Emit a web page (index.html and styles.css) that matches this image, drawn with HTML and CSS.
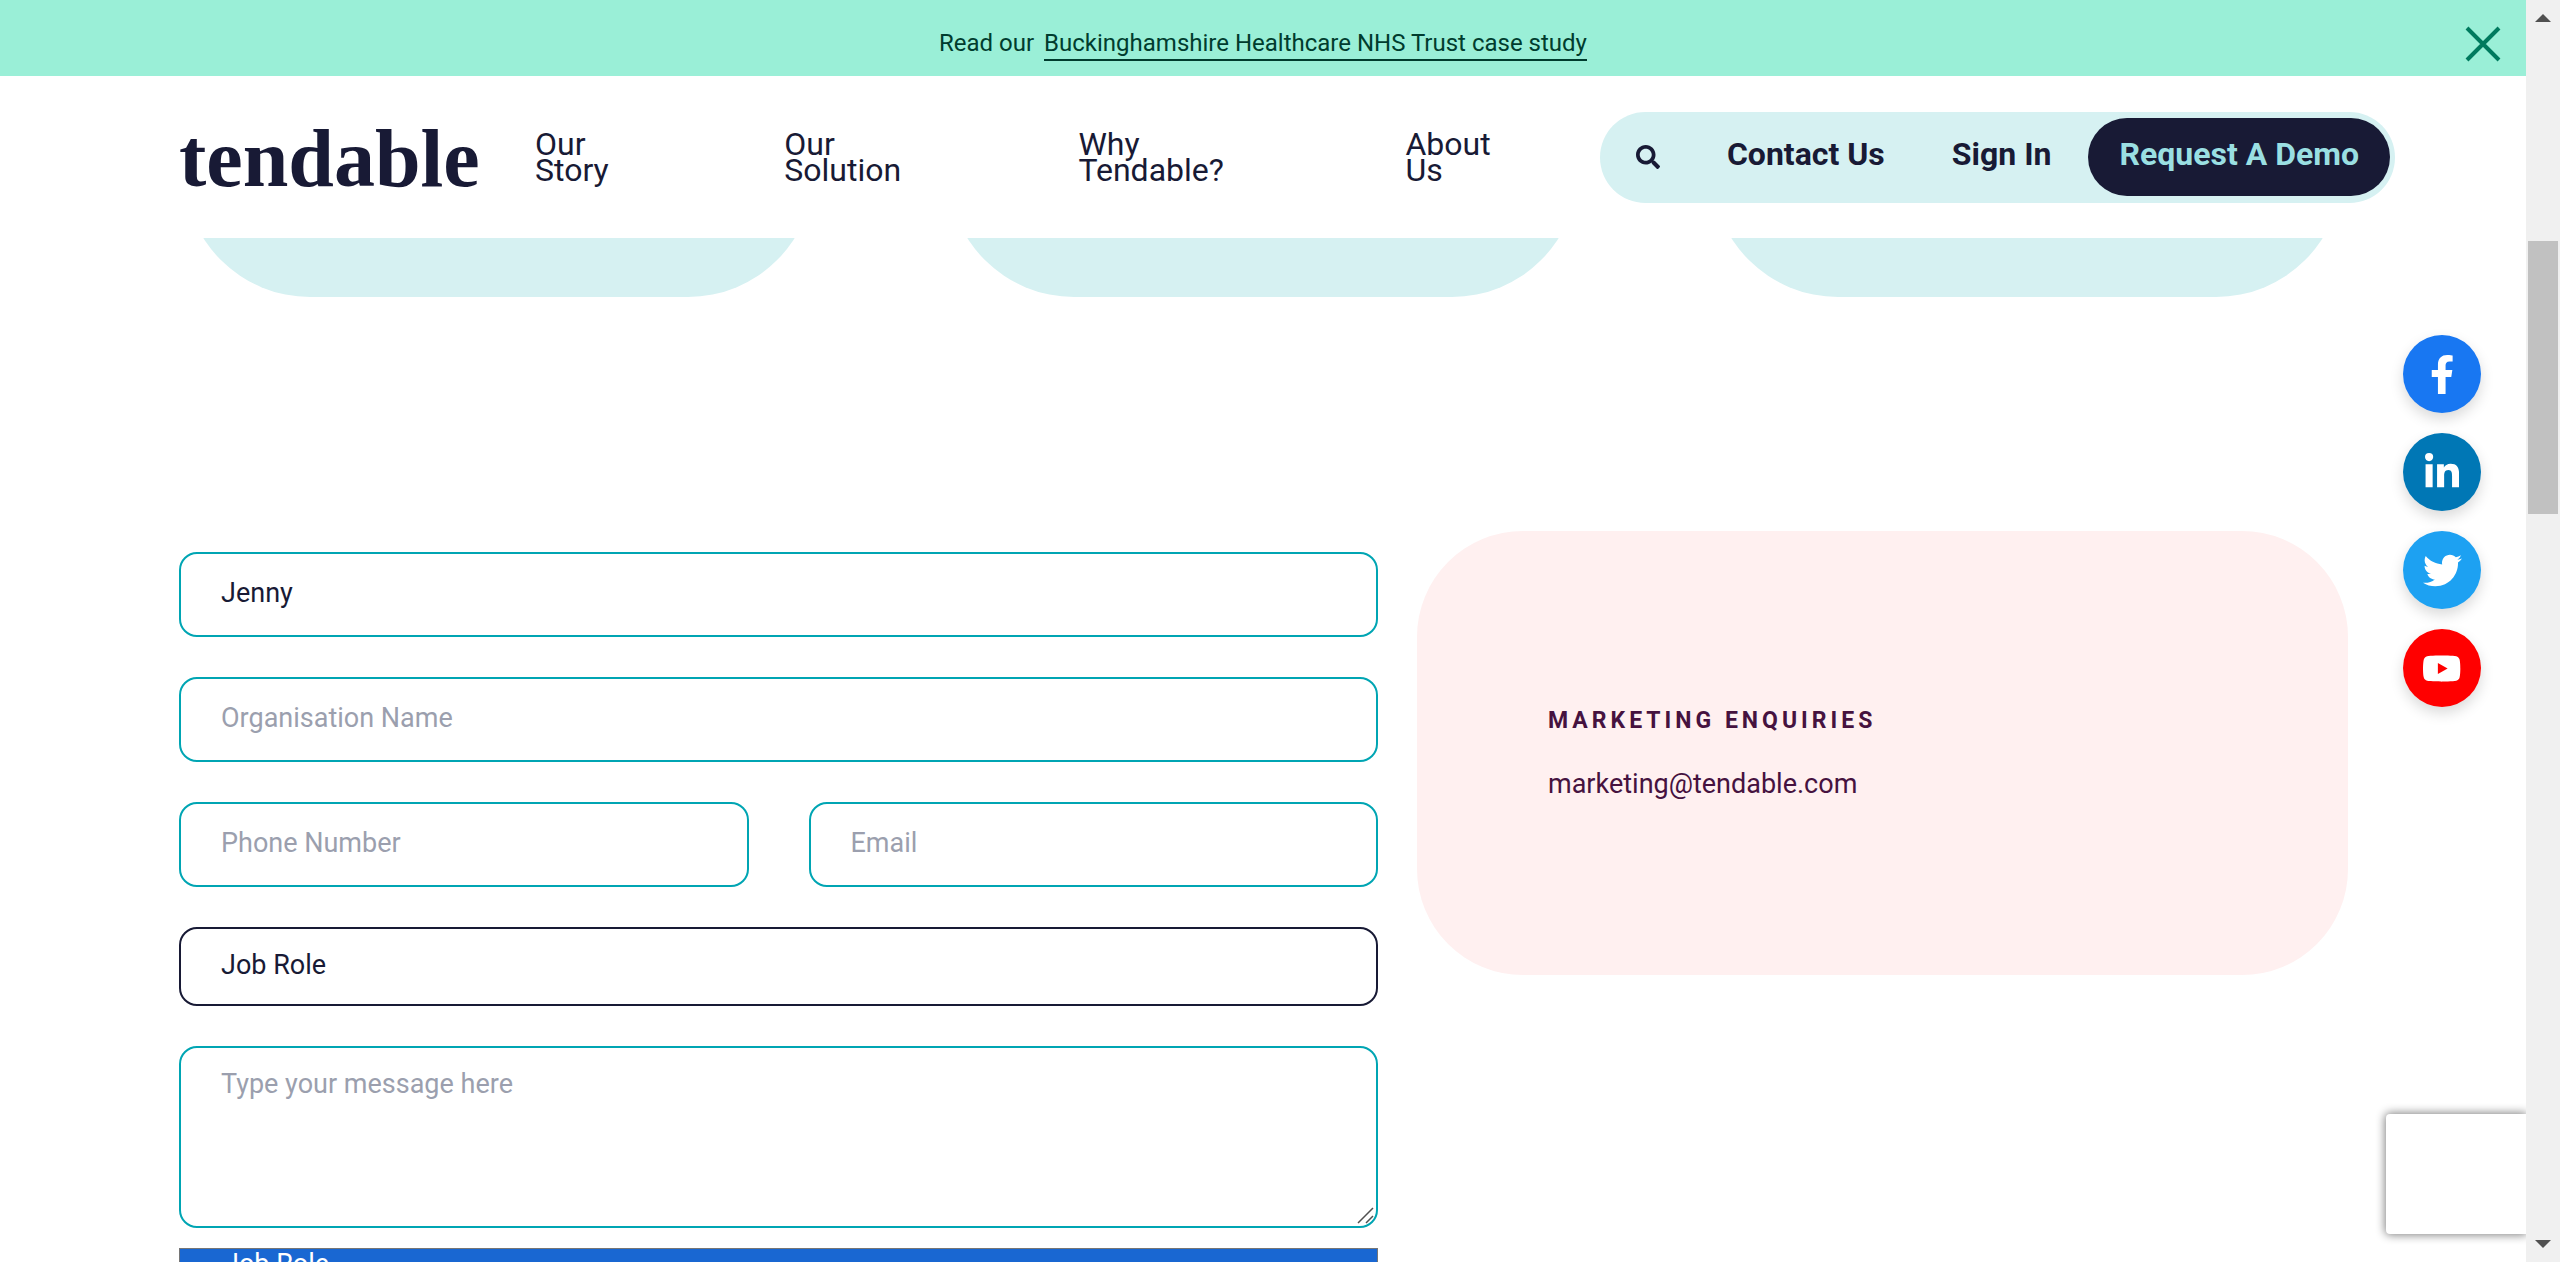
FILE: index.html
```html
<!DOCTYPE html>
<html lang="en">
<head>
<meta charset="utf-8">
<meta name="viewport" content="width=device-width, initial-scale=1">
<title>Contact | Tendable</title>
<link rel="stylesheet" href="styles.css">
</head>
<body>
<div class="page">
  <div class="banner">
    <p class="banner-text">Read our <a class="banner-link" href="#case-study">Buckinghamshire Healthcare NHS Trust case study</a></p>
    <button class="banner-close" type="button" aria-label="Close">
      <svg viewBox="0 0 36 36" width="36" height="36" fill="none" stroke="currentColor" stroke-width="4"><path d="M2 2 34 34M34 2 2 34"/></svg>
    </button>
  </div>

  <header class="header">
    <a class="logo" href="#home">tendable</a>
    <nav class="nav">
      <a href="#story">Our<br>Story</a>
      <a href="#solution">Our<br>Solution</a>
      <a href="#why">Why<br>Tendable?</a>
      <a href="#about">About<br>Us</a>
    </nav>
    <div class="actions">
      <button class="search" type="button" aria-label="Search">
        <svg viewBox="0 0 512 512" width="24" height="24" fill="currentColor"><path d="M505 442.7L405.3 343c-4.500-4.500-10.600-7-17-7H372c27.600-35.300 44-79.700 44-128C416 93.100 322.900 0 208 0S0 93.100 0 208s93.100 208 208 208c48.300 0 92.700-16.400 128-44v16.300c0 6.400 2.500 12.500 7 17l99.700 99.700c9.400 9.400 24.600 9.400 33.900 0l28.300-28.300c9.400-9.400 9.400-24.600.1-34zM208 336c-70.700 0-128-57.200-128-128 0-70.700 57.200-128 128-128 70.700 0 128 57.200 128 128 0 70.700-57.200 128-128 128z"/></svg>
      </button>
      <a class="action" href="#contact">Contact Us</a>
      <a class="action" href="#signin">Sign In</a>
      <a class="demo" href="#demo">Request A Demo</a>
    </div>
  </header>

  <main>
    <div class="cards">
      <div class="card"></div>
      <div class="card"></div>
      <div class="card"></div>
    </div>

    <section class="contact">
      <form class="form">
        <input class="field" type="text" aria-label="Name" value="Jenny">
        <input class="field" type="text" aria-label="Organisation Name" placeholder="Organisation Name">
        <div class="pair">
          <input class="field" type="tel" aria-label="Phone Number" placeholder="Phone Number">
          <input class="field" type="email" aria-label="Email" placeholder="Email">
        </div>
        <select class="field select" aria-label="Job Role"><option>Job Role</option></select>
        <div class="message">
          <textarea class="field area" aria-label="Message" placeholder="Type your message here"></textarea>
          <svg class="grip" viewBox="0 0 18 18" width="18" height="18" fill="none" stroke="#505050" stroke-width="1.500"><path d="M1 16 16 1M9 16 16 9"/></svg>
        </div>
        <ul class="options" role="listbox" aria-label="Job Role">
          <li role="option" aria-selected="true">Job Role</li>
        </ul>
      </form>
      <aside class="enquiries">
        <h2>MARKETING ENQUIRIES</h2>
        <a href="mailto:marketing@tendable.com">marketing@tendable.com</a>
      </aside>
    </section>
  </main>
</div>

<div class="social">
  <a class="facebook" href="#facebook" aria-label="Facebook"><svg viewBox="0 0 320 512" height="39" fill="#fff"><path d="M279.140 288l14.220-92.660h-88.910v-60.130c0-25.350 12.420-50.060 52.240-50.060h40.420V6.260S260.430 0 225.360 0c-73.220 0-121.080 44.380-121.080 124.720v70.620H22.890V288h81.390v224h100.170V288z"/></svg></a>
  <a class="linkedin" href="#linkedin" aria-label="LinkedIn"><svg viewBox="0 0 448 512" height="39" fill="#fff"><path d="M100.280 448H7.400V148.900h92.880zM53.790 108.100C24.090 108.100 0 83.500 0 53.800a53.790 53.790 0 0 1 107.580 0c0 29.700-24.100 54.300-53.790 54.300zM447.900 448h-92.680V302.400c0-34.700-.7-79.200-48.290-79.200-48.290 0-55.690 37.700-55.690 76.700V448h-92.780V148.900h89.080v40.800h1.300c12.400-23.500 42.690-48.300 87.880-48.300 94 0 111.280 61.900 111.280 142.300V448z"/></svg></a>
  <a class="twitter" href="#twitter" aria-label="Twitter"><svg viewBox="0 0 512 512" height="39" fill="#fff"><path d="M459.370 151.716c.325 4.548.325 9.097.325 13.645 0 138.720-105.583 298.558-298.558 298.558-59.452 0-114.680-17.219-161.137-47.106 8.447.974 16.568 1.299 25.340 1.299 49.055 0 94.213-16.568 130.274-44.832-46.132-.975-84.792-31.188-98.112-72.772 6.498.974 12.995 1.624 19.818 1.624 9.421 0 18.843-1.300 27.614-3.573-48.081-9.747-84.143-51.980-84.143-102.985v-1.299c13.969 7.797 30.214 12.670 47.431 13.319-28.264-18.843-46.781-51.005-46.781-87.391 0-19.492 5.197-37.360 14.294-52.954 51.655 63.675 129.300 105.258 216.365 109.807-1.624-7.797-2.599-15.918-2.599-24.040 0-57.828 46.782-104.934 104.934-104.934 30.213 0 57.502 12.670 76.670 33.137 23.715-4.548 46.456-13.320 66.599-25.340-7.798 24.366-24.366 44.833-46.132 57.827 21.117-2.273 41.584-8.122 60.426-16.243-14.292 20.791-32.161 39.308-52.628 54.253z"/></svg></a>
  <a class="youtube" href="#youtube" aria-label="YouTube"><svg viewBox="0 0 576 512" height="35" fill="#fff"><path d="M549.655 124.083c-6.281-23.650-24.787-42.276-48.284-48.597C458.781 64 288 64 288 64S117.220 64 74.629 75.486c-23.497 6.322-42.003 24.947-48.284 48.597-11.412 42.867-11.412 132.305-11.412 132.305s0 89.438 11.412 132.305c6.281 23.650 24.787 41.500 48.284 47.821C117.220 448 288 448 288 448s170.780 0 213.371-11.486c23.497-6.321 42.003-24.171 48.284-47.821 11.412-42.867 11.412-132.305 11.412-132.305s0-89.438-11.412-132.305zm-317.510 213.508V175.185l142.739 81.205-142.739 81.201z"/></svg></a>
</div>

<div class="captcha"></div>

<div class="scrollbar">
  <svg viewBox="0 0 16 8" width="16" height="8" fill="#505050"><path d="M8 0 16 8H0z"/></svg>
  <div class="track"><div class="thumb"></div></div>
  <svg viewBox="0 0 16 8" width="16" height="8" fill="#505050"><path d="M0 0H16L8 8z"/></svg>
</div>
</body>
</html>
```

FILE: styles.css
```css
:root {
  --navy: #181a35;
  --mist: #d6f1f2;
  --teal: #00a5b3;
  --plum: #46123f;
  --scrollbar: 34px;
}

* {
  box-sizing: border-box;
}

body {
  margin: 0;
  background: #fff;
  color: var(--navy);
  font-family: Roboto, "Liberation Sans", sans-serif;
  font-size: 27px;
}

a {
  color: inherit;
  text-decoration: none;
}

button {
  padding: 0;
  border: 0;
  background: none;
  color: inherit;
  cursor: pointer;
}

svg {
  display: block;
}

.page {
  height: 100vh;
  margin-right: var(--scrollbar);
  overflow: hidden;
}

.banner {
  display: grid;
  grid-template-columns: 1fr auto 1fr;
  align-items: center;
  height: 76px;
  padding: 11px 25px 0;
  background: #9aefd7;
  color: #003c2e;
}

.banner-text {
  grid-column: 2;
  margin: 0;
  font-size: 24px;
  line-height: 32px;
}

.banner-link {
  display: inline-block;
  margin-left: 4px;
  border-bottom: 2px solid currentColor;
}

.banner-close {
  justify-self: end;
  color: #007a5e;
}

.header {
  display: flex;
  align-items: center;
  height: 162px;
  padding: 0 131px 0 179px;
}

.logo {
  width: 356px;
  padding-top: 4px;
  font-family: "Liberation Serif", serif;
  font-size: 82px;
  font-weight: 700;
  line-height: 90px;
}

.nav {
  display: grid;
  flex: 1;
  grid-template-columns: 250fr 295fr 328fr 195fr;
  font-size: 32px;
  line-height: 26px;
}

.actions {
  display: flex;
  align-items: center;
  height: 91px;
  padding: 0 5px 0 36px;
  border-radius: 46px;
  background: var(--mist);
  font-size: 32px;
  font-weight: 700;
  line-height: 72px;
}

.action {
  margin-left: 67px;
  padding-bottom: 6px;
}

.demo {
  margin-left: 37px;
  padding: 0 31px 6px;
  border-radius: 39px;
  background: var(--navy);
  color: #9adfe2;
}

.cards {
  display: flex;
  align-items: flex-end;
  gap: 134px;
  height: 59px;
  padding: 0 184px;
  overflow: hidden;
}

.card {
  flex: 1;
  height: 252px;
  border-radius: 126px;
  background: var(--mist);
}

.contact {
  display: grid;
  grid-template-columns: 1199fr 931fr;
  align-items: start;
  gap: 39px;
  padding: 234px 178px 0 179px;
}

.form {
  display: flex;
  flex-direction: column;
  gap: 40px;
  padding-top: 21px;
}

.field {
  display: block;
  width: 100%;
  height: 85px;
  padding: 0 40px 4px;
  border: 2px solid var(--teal);
  border-radius: 18px;
  outline: 0;
  background: #fff;
  color: var(--navy);
  font: inherit;
}

.field::placeholder {
  color: #9b9fae;
  opacity: 1;
}

.pair {
  display: grid;
  grid-template-columns: 1fr 1fr;
  gap: 60px;
}

.select {
  height: 79px;
  border-color: var(--navy);
  appearance: none;
}

.message {
  position: relative;
}

.area {
  height: 182px;
  padding-top: 20px;
  line-height: 32px;
  resize: none;
}

.grip {
  position: absolute;
  right: 3px;
  bottom: 3px;
}

.options {
  height: 120px;
  margin: -20px 0 0;
  padding: 0;
  border: 1px solid #767676;
  background: #1967d2;
  color: #fff;
  line-height: 30px;
  list-style: none;
}

.options li {
  padding-left: 44px;
}

.enquiries {
  display: flex;
  flex-direction: column;
  gap: 34px;
  padding: 176px 131px;
  border-radius: 106px;
  background: #fff0f0;
  color: var(--plum);
  line-height: 30px;
}

.enquiries h2 {
  margin: 0;
  font-size: 23px;
  letter-spacing: 4px;
  line-height: 28px;
}

.social {
  position: fixed;
  top: 335px;
  right: 79px;
  display: grid;
  gap: 20px;
}

.social a {
  display: grid;
  place-items: center;
  width: 78px;
  height: 78px;
  border-radius: 50%;
  box-shadow: 0 6px 14px rgba(0, 0, 0, 0.15);
}

.facebook {
  background: #1877f2;
}

.linkedin {
  background: #0077b5;
}

.twitter {
  background: #1da1f2;
}

.youtube {
  background: #f00;
}

.captcha {
  position: fixed;
  right: var(--scrollbar);
  bottom: 28px;
  width: 140px;
  height: 120px;
  border-radius: 4px 0 0 4px;
  background: #fff;
  box-shadow: 0 0 10px 1px #808080;
}

.scrollbar {
  position: fixed;
  top: 0;
  right: 0;
  bottom: 0;
  display: flex;
  flex-direction: column;
  align-items: center;
  width: var(--scrollbar);
  padding: 14px 0;
  background: #f0f0f0;
}

.track {
  flex: 1;
  padding-top: 219px;
}

.thumb {
  width: 30px;
  height: 273px;
  background: #c1c1c1;
}
```
